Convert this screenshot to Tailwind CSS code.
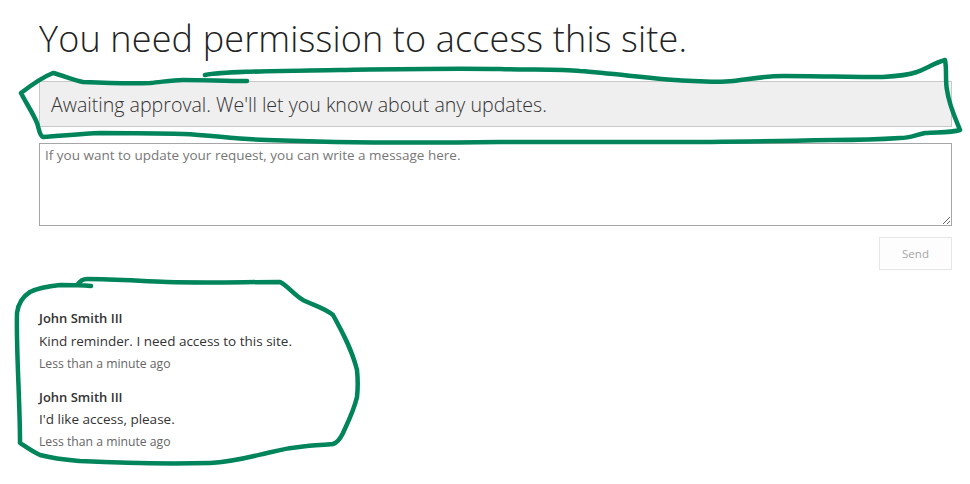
<!DOCTYPE html>
<html lang="en">
  <head>
    <meta charset="UTF-8" />
    <title>Access required</title>
    <script src="https://cdn.jsdelivr.net/npm/@tailwindcss/browser@4"></script>
  </head>
  <body class="bg-white font-['Open_Sans',sans-serif] text-[#333]">
    <div class="relative h-[484px] w-[970px] overflow-hidden">
      <main class="flex w-[952px] flex-col pl-[39px]">
        <h1 class="mt-[14px] h-[50px] text-[36px] leading-[50px] font-light tracking-[0.15px] text-[#222]">You need permission to access this site.</h1>
        <div class="mt-[17px] flex h-[46px] items-center border border-[#c8c8c8] bg-[#efefef] pt-[1px] pl-[11px] text-[19.6px] font-light text-[#333]">Awaiting approval. We'll let you know about any updates.</div>
        <textarea class="mt-[16px] block h-[83px] w-full border border-[#a6a6a6] px-[5px] py-[1px] text-[13.5px] leading-[20px] outline-none placeholder:text-[#777]" placeholder="If you want to update your request, you can write a message here."></textarea>
        <div class="mt-[11px] flex justify-end">
          <button class="h-[33px] w-[73px] border border-[#e6e6e6] bg-[#fdfdfd] text-[11.5px] text-[#a6a6a6]">Send</button>
        </div>
        <section class="mt-[38px] flex flex-col gap-[13px]">
          <div>
            <p class="text-[13px] leading-[20px] font-semibold">John Smith III</p>
            <p class="mt-[3px] text-[13.5px] leading-[20px]">Kind reminder. I need access to this site.</p>
            <p class="mt-[3px] text-[12.2px] leading-[20px] text-[#666]">Less than a minute ago</p>
          </div>
          <div>
            <p class="text-[13px] leading-[20px] font-semibold">John Smith III</p>
            <p class="mt-[2px] text-[13.5px] leading-[20px]">I'd like access, please.</p>
            <p class="mt-[3px] text-[12.2px] leading-[20px] text-[#666]">Less than a minute ago</p>
          </div>
        </section>
      </main>
      <!-- hand-drawn green marks sit on top of the page -->
      <svg class="pointer-events-none absolute top-0 left-0" width="970" height="484" fill="none" stroke="#00845a" stroke-width="4.5" stroke-linecap="round" stroke-linejoin="round">
        <path d="M205 75C225 71 280 71 340 70C400 69 450 68 500 69C530 70 560 69 580 71C620 74 660 80 693 81C710 82 725 82 733 81C750 79 765 76 783 76C815 76 850 77 883 77C900 76 908 75 917 72C927 68 937 62 945 60C947 70 945 80 947 90C949 105 956 120 960 130C950 133 937 132 925 133C915 135 910 138 900 138C870 140 850 140 833 140C780 141 720 142 667 142L500 142C420 143 340 143 267 140C235 139 210 135 183 134C150 133 125 133 100 133C80 134 60 136 43 137C39 135 39 128 37 123C33 113 26 103 21 93C30 86 43 77 53 73C62 75 72 80 83 82C105 83 130 84 150 83C162 82 172 80 183 80C205 80 225 81 247 81" />
        <path d="M91 286C80 285 70 285 60 285C50 286 38 288 30 292C22 297 18 305 17 313C16 350 20 400 20 443C26 447 33 452 40 455C55 459 68 460 80 461C120 463 170 464 210 463C232 462 250 457 267 453C282 449 295 447 307 446C316 445 325 445 333 444C339 442 341 437 343 433C349 420 354 410 357 397C358 388 358 380 357 370C352 350 343 333 333 315C325 308 313 305 303 300C294 295 288 286 280 282C245 282 205 283 167 282C140 281 112 279 87 279C83 279 80 281 78 284" />
      </svg>
    </div>
  </body>
</html>
